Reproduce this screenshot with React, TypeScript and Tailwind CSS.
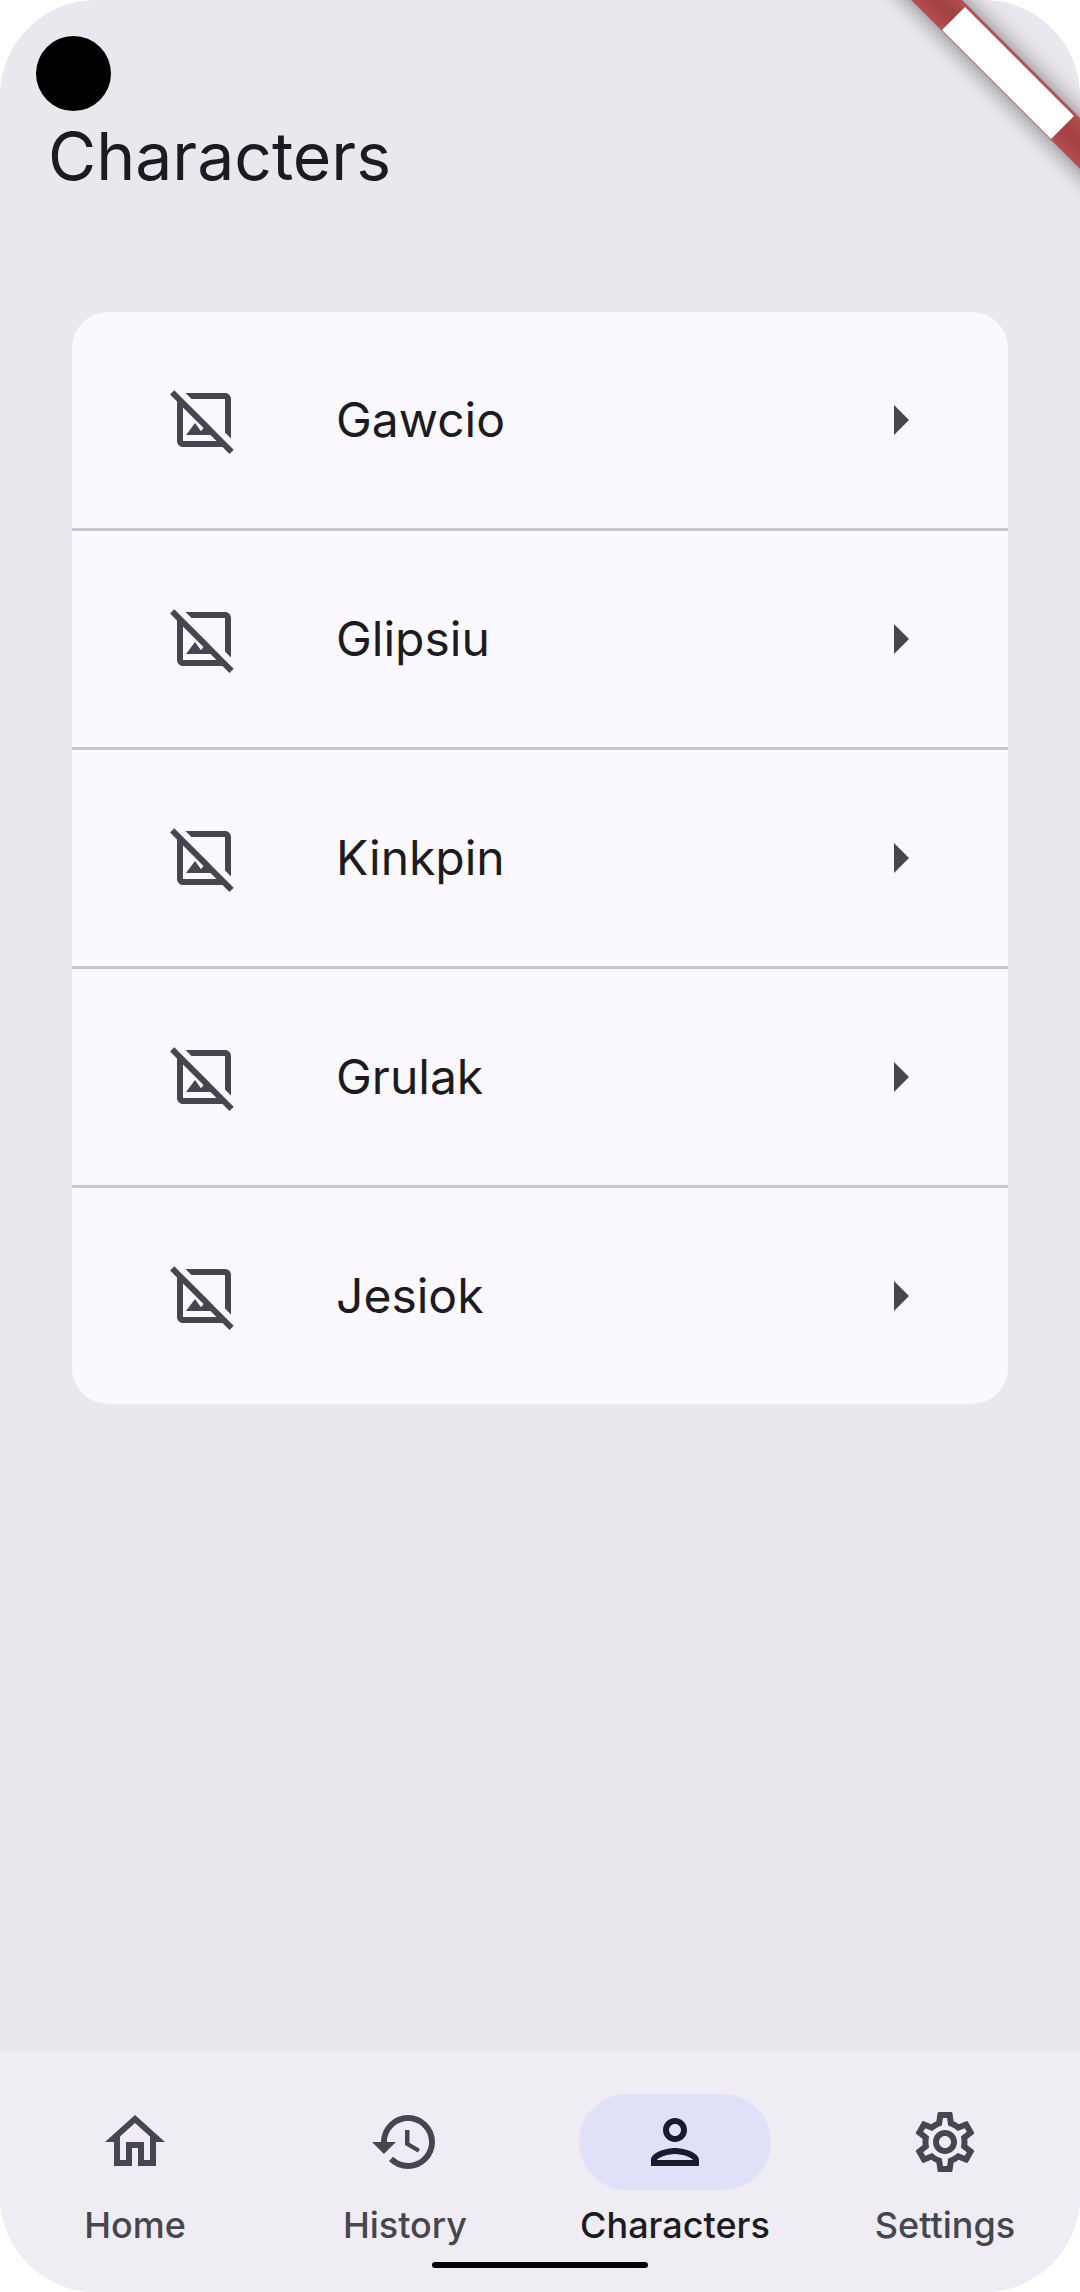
import type { ReactNode } from "react";
import {
  MdArrowRight,
  MdHistory,
  MdOutlineHome,
  MdOutlineImageNotSupported,
  MdOutlineSettings,
} from "react-icons/md";

const characters = ["Gawcio", "Glipsiu", "Kinkpin", "Grulak", "Jesiok"];

function PersonIcon() {
  return (
    <svg viewBox="0 0 24 24" className="size-[72px]" fill="currentColor" aria-hidden="true">
      <path d="M12 6c1.1 0 2 .9 2 2s-.9 2-2 2-2-.9-2-2 .9-2 2-2m0 10c2.7 0 5.8 1.29 6 2H6c.23-.72 3.31-2 6-2m0-12C9.79 4 8 5.79 8 8s1.79 4 4 4 4-1.79 4-4-1.79-4-4-4zm0 10c-2.67 0-8 1.34-8 4v2h16v-2c0-2.66-5.33-4-8-4z" />
    </svg>
  );
}

function CornerRibbon() {
  return (
    <svg
      viewBox="0 0 240 240"
      className="pointer-events-none absolute top-0 right-0 size-[240px]"
      aria-hidden="true"
    >
      <defs>
        <filter id="ribbon-shadow" x="-50%" y="-50%" width="200%" height="200%">
          <feGaussianBlur stdDeviation="12" />
        </filter>
      </defs>
      <path d="M-29 -100L22 -100L340 218L340 269Z" fill="#000" fillOpacity="0.5" filter="url(#ribbon-shadow)" />
      <path d="M-29 -100L22 -100L340 218L340 269Z" fill="#b71c1c" fillOpacity="0.63" />
      <path d="M125 7L234 116L211 139L102 30Z" fill="#fff" />
    </svg>
  );
}

function NavItem({ icon, label, active = false }: { icon: ReactNode; label: string; active?: boolean }) {
  return (
    <a
      href="#"
      aria-current={active ? "page" : undefined}
      className={`flex flex-1 flex-col items-center gap-3 ${active ? "text-[#1b1b21]" : "text-[#46464f]"}`}
    >
      <span
        className={`flex h-24 w-48 items-center justify-center rounded-full ${
          active ? "bg-[#e1e0f9] text-[#191a2c]" : ""
        }`}
      >
        {icon}
      </span>
      <span className="text-[36px] leading-[46px] font-medium">{label}</span>
    </a>
  );
}

export default function App() {
  return (
    <div className="relative flex min-h-screen flex-col overflow-hidden rounded-[96px] bg-[#eae7ef] font-[Inter,sans-serif] text-[#1b1b21] [font-optical-sizing:none]">
      <div className="absolute top-9 left-9 size-[75px] rounded-full bg-black" />

      <header className="flex h-[252px] items-center px-12 pt-[60px]">
        <h1 className="text-[66px] leading-[84px] font-normal">Characters</h1>
      </header>

      <main className="flex-1 px-[72px] pt-[60px]">
        <ul className="divide-y-3 divide-[#c7c5d0] overflow-hidden rounded-[36px] bg-[#fbf8ff]">
          {characters.map((name) => (
            <li key={name}>
              <button type="button" className="flex h-[216px] w-full items-center pr-[72px] pl-24 text-left">
                <MdOutlineImageNotSupported className="size-[72px] text-[#46464f]" aria-hidden="true" />
                <span className="flex-1 pl-24 text-[48px] leading-[72px]">{name}</span>
                <MdArrowRight className="size-[72px] text-[#46464f]" aria-hidden="true" />
              </button>
            </li>
          ))}
        </ul>
      </main>

      <nav className="flex h-60 bg-[#f0ecf4] pt-[42px]" aria-label="Main">
        <NavItem icon={<MdOutlineHome className="size-[72px]" />} label="Home" />
        <NavItem icon={<MdHistory className="size-[72px]" />} label="History" />
        <NavItem icon={<PersonIcon />} label="Characters" active />
        <NavItem icon={<MdOutlineSettings className="size-[72px]" />} label="Settings" />
      </nav>

      <div className="absolute bottom-6 left-1/2 h-1.5 w-[216px] -translate-x-1/2 rounded-full bg-black" />
      <CornerRibbon />
    </div>
  );
}
